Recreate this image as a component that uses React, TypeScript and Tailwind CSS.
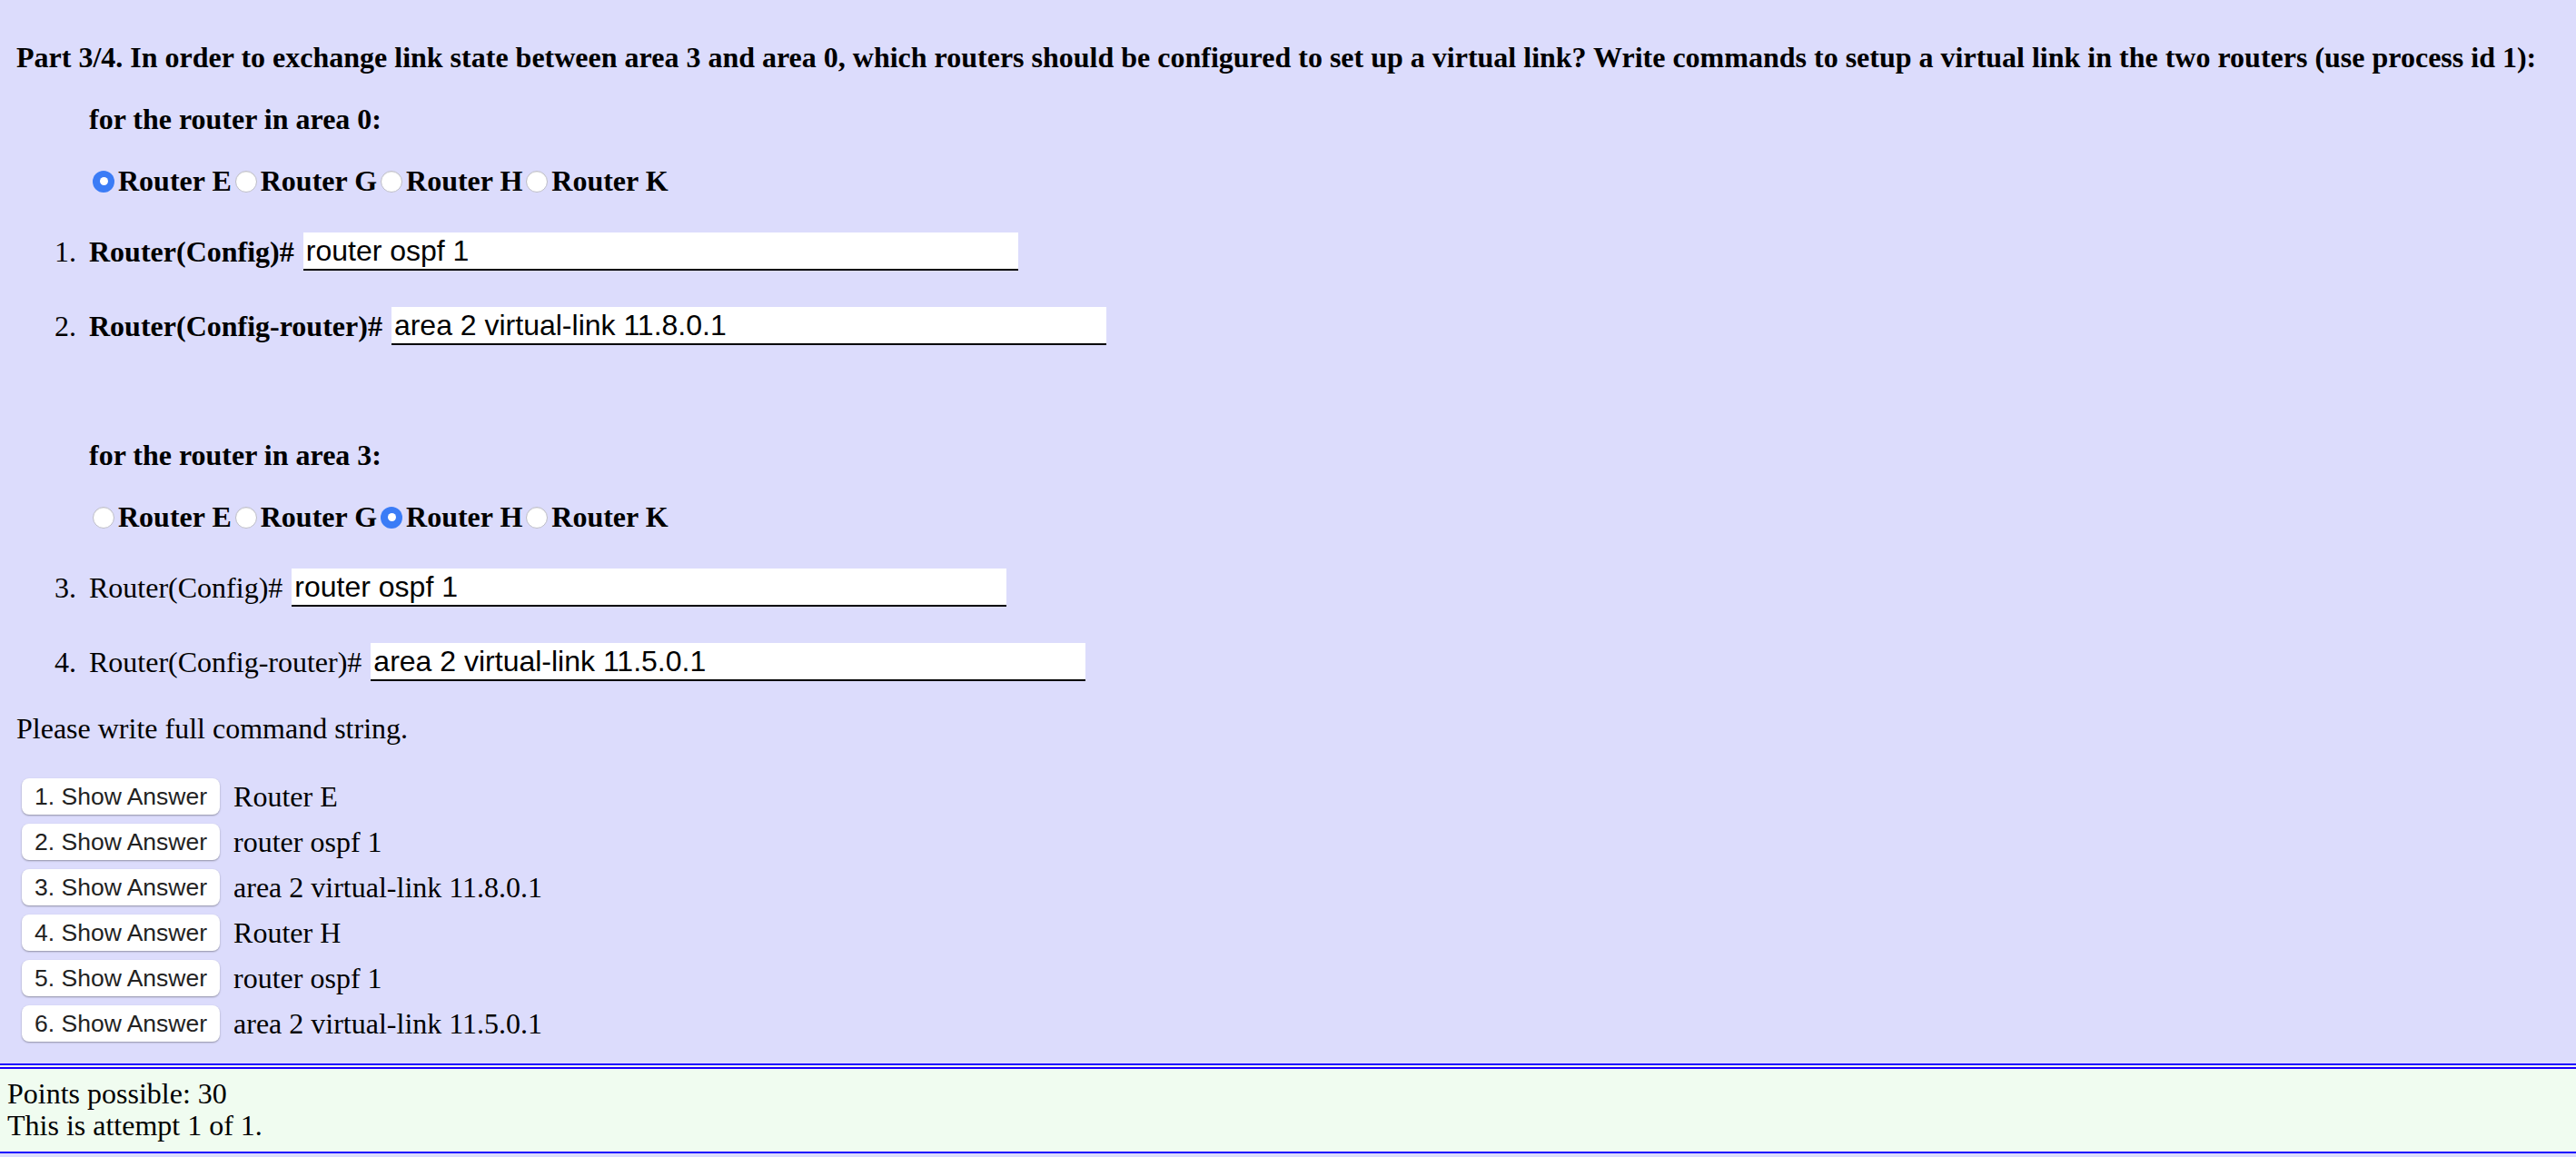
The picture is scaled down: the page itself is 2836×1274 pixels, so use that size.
import React from 'react';

const routers = ['Router E', 'Router G', 'Router H', 'Router K'];

const Radio = ({ checked }: { checked: boolean }) =>
  checked ? (
    <span className="mx-[4px] flex h-[24px] w-[24px] shrink-0 items-center justify-center rounded-full bg-[#3b7cf6]">
      <span className="h-[9px] w-[9px] rounded-full bg-white" />
    </span>
  ) : (
    <span className="mx-[4px] h-[24px] w-[24px] shrink-0 rounded-full border border-[#bdbdc8] bg-white shadow-[inset_0_1px_1px_rgba(0,0,0,0.08)]" />
  );

const RadioRow = ({ selected }: { selected: string }) => (
  <div className="flex h-[37px] items-center font-bold">
    {routers.map((r) => (
      <React.Fragment key={r}>
        <Radio checked={r === selected} />
        <span>{r}</span>
      </React.Fragment>
    ))}
  </div>
);

const CommandRow = ({
  num,
  label,
  value,
  bold,
}: {
  num: number;
  label: string;
  value: string;
  bold?: boolean;
}) => (
  <div className="flex h-[42px] items-center pl-[42px]">
    <span className="w-[38px]">{num}.</span>
    <span className={bold ? 'font-bold' : ''}>{label}</span>
    <div className="ml-[10px] flex h-[42px] w-[787px] items-center border-b-[2px] border-black bg-white pl-[3px] font-['Liberation_Sans',Arial,sans-serif] text-[32px]">
      {value}
    </div>
  </div>
);

const answers = [
  'Router E',
  'router ospf 1',
  'area 2 virtual-link 11.8.0.1',
  'Router H',
  'router ospf 1',
  'area 2 virtual-link 11.5.0.1',
];

export default function App() {
  return (
    <div className="min-h-screen bg-[#dcdcfc] font-['Liberation_Serif','Times_New_Roman',serif] text-[32px] leading-[37px] text-black">
      <div className="pl-[18px] pt-[45px]">
        <p className="whitespace-nowrap font-bold">
          Part 3/4. In order to exchange link state between area 3 and area 0, which routers should be configured to set up a virtual link? Write commands to setup a virtual link in the two routers (use process id 1):
        </p>

        <p className="mt-[31px] pl-[80px] font-bold">for the router in area 0:</p>
        <div className="mt-[31px] pl-[80px]">
          <RadioRow selected="Router E" />
        </div>

        <div className="mt-[38px]">
          <CommandRow num={1} label="Router(Config)#" value="router ospf 1" bold />
        </div>
        <div className="mt-[40px]">
          <CommandRow num={2} label="Router(Config-router)#" value="area 2 virtual-link 11.8.0.1" bold />
        </div>

        <p className="mt-[103px] pl-[80px] font-bold">for the router in area 3:</p>
        <div className="mt-[31px] pl-[80px]">
          <RadioRow selected="Router H" />
        </div>

        <div className="mt-[38px]">
          <CommandRow num={3} label="Router(Config)#" value="router ospf 1" />
        </div>
        <div className="mt-[40px]">
          <CommandRow num={4} label="Router(Config-router)#" value="area 2 virtual-link 11.5.0.1" />
        </div>

        <p className="mt-[34px]">Please write full command string.</p>

        <div className="mt-[36px] flex flex-col gap-[10px] pl-[6px]">
          {answers.map((a, i) => (
            <div key={i} className="flex h-[40px] items-center gap-[15px]">
              <button className="h-[40px] rounded-[8px] bg-white px-[14px] font-['Liberation_Sans',Arial,sans-serif] text-[26.5px] leading-none text-[#222] shadow-[0_1px_2px_rgba(0,0,0,0.35)]">
                {i + 1}. Show Answer
              </button>
              <span>{a}</span>
            </div>
          ))}
        </div>
      </div>

      <div className="mt-[24px] border-t-[6px] border-b-[2px] border-double border-[#1c00ff] bg-[#f0fcf0] px-[8px] pb-[11px] pt-[10px] leading-[35px]">
        <div>Points possible: 30</div>
        <div>This is attempt 1 of 1.</div>
      </div>
    </div>
  );
}
